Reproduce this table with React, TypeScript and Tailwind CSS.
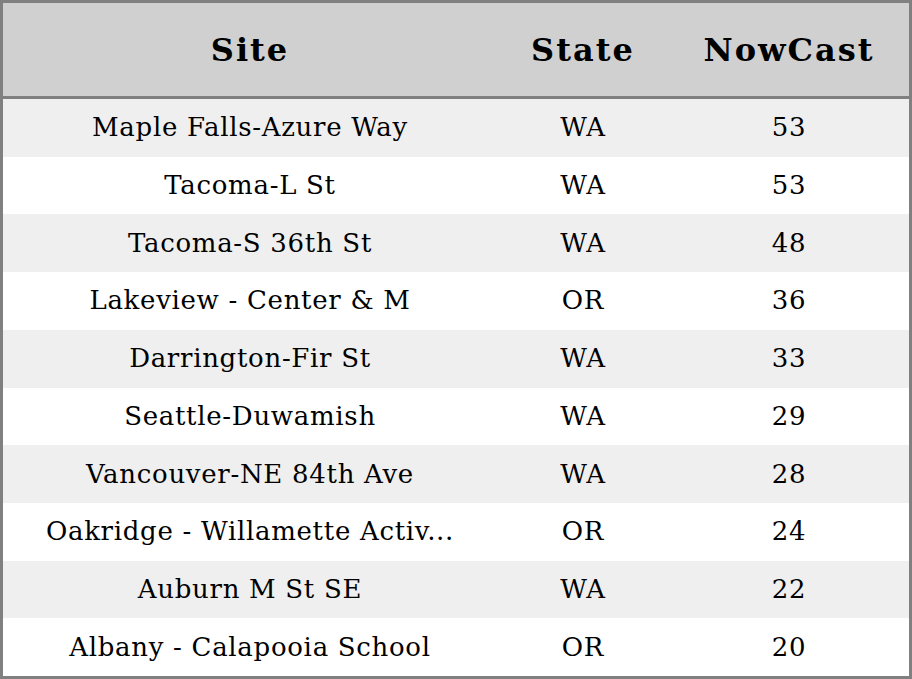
const rows: [string, string, number][] = [
  ['Maple Falls-Azure Way', 'WA', 53],
  ['Tacoma-L St', 'WA', 53],
  ['Tacoma-S 36th St', 'WA', 48],
  ['Lakeview - Center & M', 'OR', 36],
  ['Darrington-Fir St', 'WA', 33],
  ['Seattle-Duwamish', 'WA', 29],
  ['Vancouver-NE 84th Ave', 'WA', 28],
  ['Oakridge - Willamette Activ...', 'OR', 24],
  ['Auburn M St SE', 'WA', 22],
  ['Albany - Calapooia School', 'OR', 20],
];

export default function App() {
  return (
    <div className="w-[912px] h-[679px] bg-white border-[3px] border-[#808080] flex flex-col text-black font-['DejaVu_Serif',serif]">
      <div className="h-[93px] shrink-0 flex items-center bg-[#d0d0d0] border-b-[3px] border-[#808080] box-content text-[32px] font-bold tracking-[2px]">
        <div className="w-[494px] text-center">Site</div>
        <div className="w-[172px] text-center">State</div>
        <div className="flex-1 text-center">NowCast</div>
      </div>
      <div className="flex-1 flex flex-col">
        {rows.map(([site, state, val], i) => (
          <div
            key={i}
            className={`flex-1 flex items-center text-[26px] tracking-[0.7px] ${i % 2 === 0 ? 'bg-[#efefef]' : 'bg-white'}`}
          >
            <div className="w-[494px] text-center whitespace-nowrap">{site}</div>
            <div className="w-[172px] text-center">{state}</div>
            <div className="flex-1 text-center">{val}</div>
          </div>
        ))}
      </div>
    </div>
  );
}
